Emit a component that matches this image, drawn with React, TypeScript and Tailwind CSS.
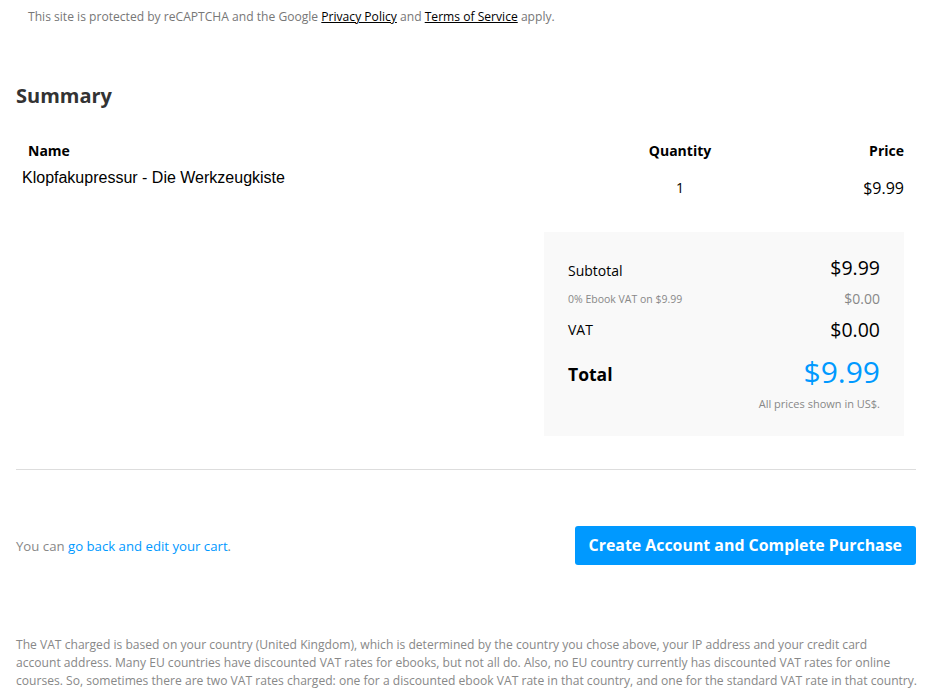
import React from "react";

const sans = { fontFamily: '"Open Sans", "Noto Sans", sans-serif' };

const SummaryRow = ({
  label,
  value,
  labelClass,
  valueClass,
  className = "",
}: {
  label: string;
  value: string;
  labelClass: string;
  valueClass: string;
  className?: string;
}) => (
  <div className={`flex items-center justify-between ${className}`}>
    <span className={labelClass}>{label}</span>
    <span className={valueClass}>{value}</span>
  </div>
);

export default function App() {
  return (
    <div
      className="w-[950px] bg-white font-['Open_Sans','Noto_Sans',sans-serif] text-[#333]"
      style={sans}
    >
      <div className="px-4">
        <p className="pl-3 pt-[8px] text-[12.1px] leading-[18px] text-[#777]">
          This site is protected by reCAPTCHA and the Google{" "}
          <a className="text-black underline">Privacy Policy</a> and{" "}
          <a className="text-black underline">Terms of Service</a> apply.
        </p>

        <h2 className="mt-[56px] text-[20px] font-bold leading-[28px] text-[#333]">
          Summary
        </h2>

        <div className="mt-[31px] w-[900px]">
          <div className="grid grid-cols-[1fr_160px_156px] text-[14px] font-bold leading-[20px] text-black">
            <div className="pl-3">Name</div>
            <div className="text-center">Quantity</div>
            <div className="pr-3 text-right">Price</div>
          </div>
          <div className="grid grid-cols-[1fr_160px_156px] text-[16px] leading-[20px] text-black">
            <div className="pl-[6px] pt-[8px] font-['Liberation_Sans',Arial,sans-serif] text-[16px] leading-[18px]">
              Klopfakupressur - Die Werkzeugkiste
            </div>
            <div className="pt-[17px] text-center text-[14px]">1</div>
            <div className="pr-3 pt-[17px] text-right">$9.99</div>
          </div>

          <div className="mt-[34px] flex justify-end pr-3">
            <div className="w-[360px] bg-[#f9f9f9] px-6 pb-[25px] pt-[22px]">
              <SummaryRow
                label="Subtotal"
                value="$9.99"
                labelClass="text-[14px] text-black pt-[4px]"
                valueClass="text-[19.5px] leading-[28px] text-black"
              />
              <SummaryRow
                className="mt-[7px]"
                label="0% Ebook VAT on $9.99"
                value="$0.00"
                labelClass="text-[10.5px] text-[#888] pt-[2px]"
                valueClass="text-[14px] leading-[20px] text-[#888]"
              />
              <SummaryRow
                className="mt-[2px]"
                label="VAT"
                value="$0.00"
                labelClass="text-[14px] text-black pt-[4px]"
                valueClass="text-[19.5px] leading-[28px] text-black mt-[5px]"
              />
              <SummaryRow
                className="mt-[6px]"
                label="Total"
                value="$9.99"
                labelClass="text-[17.5px] font-bold text-black pt-[6px]"
                valueClass="text-[30px] leading-[40px] text-[#0099ff] mt-[2px]"
              />
              <div className="mt-[5px] text-right text-[11px] leading-[14px] text-[#888]">
                All prices shown in US$.
              </div>
            </div>
          </div>
        </div>

        <hr className="mt-[33px] w-[900px] border-t border-[#ddd]" />

        <div className="mt-[56px] flex w-[900px] items-center justify-between">
          <p className="pt-[3px] text-[13.2px] text-[#888]">
            You can <a className="text-[#0099ff]">go back and edit your cart</a>.
          </p>
          <button className="h-[39px] rounded-[3px] bg-[#0099ff] px-[14px] text-[15.9px] font-bold text-white">
            Create Account and Complete Purchase
          </button>
        </div>

        <p className="mt-[71px] w-[912px] pb-2 text-[12.1px] leading-[18px] text-[#888]">
          The VAT charged is based on your country (United Kingdom), which is
          determined by the country you chose above, your IP address and your
          credit card
          <br />
          account address. Many EU countries have discounted VAT rates for
          ebooks, but not all do. Also, no EU country currently has discounted
          VAT rates for online
          <br />
          courses. So, sometimes there are two VAT rates charged: one for a
          discounted ebook VAT rate in that country, and one for the standard
          VAT rate in that country.
        </p>
      </div>
    </div>
  );
}
